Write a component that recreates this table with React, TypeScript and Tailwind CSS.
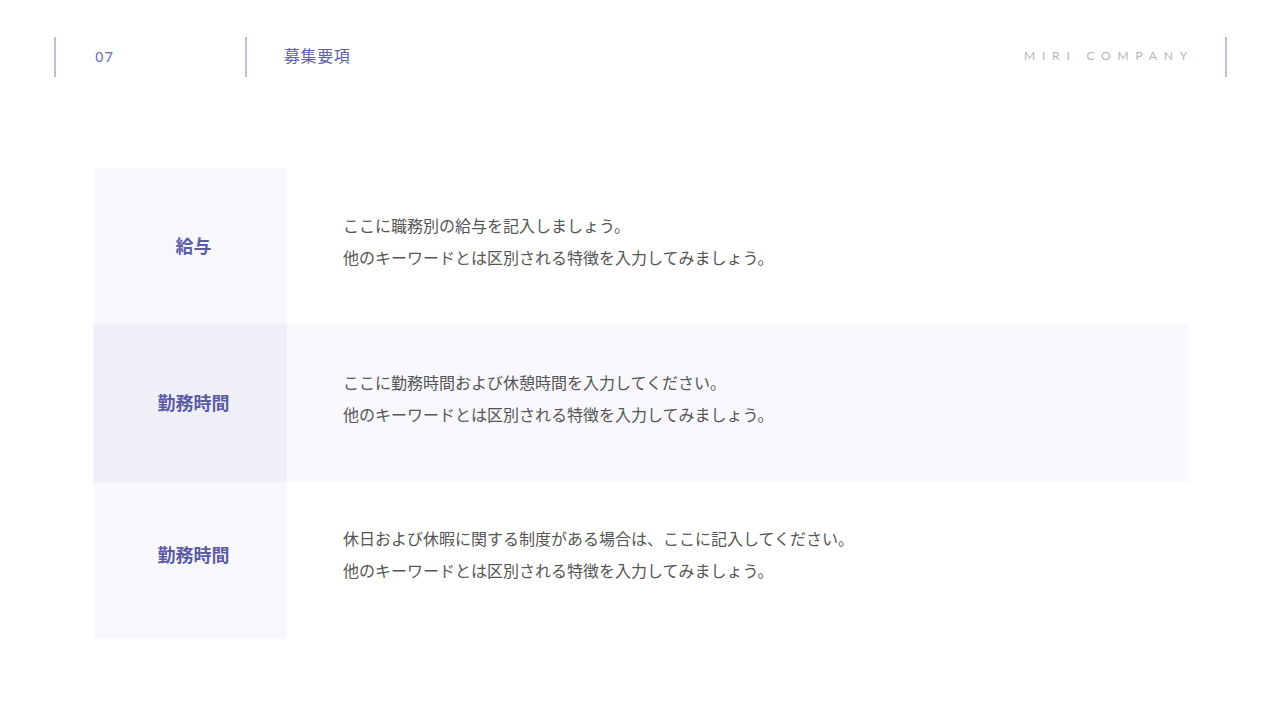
const rows = [
  {
    label: "給与",
    lines: ["ここに職務別の給与を記入しましょう。", "他のキーワードとは区別される特徴を入力してみましょう。"],
    highlight: false,
  },
  {
    label: "勤務時間",
    lines: ["ここに勤務時間および休憩時間を入力してください。", "他のキーワードとは区別される特徴を入力してみましょう。"],
    highlight: true,
  },
  {
    label: "勤務時間",
    lines: ["休日および休暇に関する制度がある場合は、ここに記入してください。", "他のキーワードとは区別される特徴を入力してみましょう。"],
    highlight: false,
  },
];

export default function App() {
  return (
    <main
      className="w-[1280px] h-[720px] bg-white overflow-hidden"
      style={{ fontFamily: '"Noto Sans", "Noto Sans CJK JP", sans-serif' }}
    >
      {/* Header */}
      <header className="flex items-center pt-[37px] pl-[54px] pr-[53px] h-[77px]">
        <div className="w-[2px] h-[40px] bg-[#bdbdd6]" />
        <div className="w-[189px] pl-[39px] pb-[2px] text-[15px] text-[#6d6db4] tracking-[1px]">07</div>
        <div className="w-[2px] h-[40px] bg-[#bdbdd6]" />
        <div className="pl-[37px] pb-[2px] text-[16px] tracking-[0.6px] text-[#5f5fa8]">募集要項</div>
        <div className="flex-1" />
        <div
          className="text-[12px] tracking-[6.8px] text-[#b4b4c0] pr-[31px] pb-[2px]"
          style={{ fontFamily: "Lato, sans-serif" }}
        >
          MIRI COMPANY
        </div>
        <div className="w-[2px] h-[40px] bg-[#bdbdd6]" />
      </header>

      {/* Table */}
      <section className="mt-[91px] ml-[94px] w-[1092px] flex flex-col">
        {rows.map((r, i) => (
          <div
            key={i}
            className={`flex h-[157px] ${
              r.highlight ? "bg-[#f7f7fc] shadow-[0_0_4px_rgba(236,236,248,0.8)]" : "bg-white"
            }`}
          >
            <div
              className={`w-[193px] flex items-center justify-center pl-[6px] text-[18px] font-bold text-[#5c5ca6] ${
                r.highlight ? "bg-[#efeff8]" : "bg-[#f8f8fc]"
              } ${i === 2 ? "pb-[10px]" : ""}`}
            >
              {r.label}
            </div>
            <div
              className={`flex flex-col justify-center pl-[56px] text-[16px] leading-[32px] text-[#555555] ${
                i === 2 ? "pb-[12px]" : "pb-[9px]"
              }`}
            >
              {r.lines.map((l, j) => (
                <p key={j}>{l}</p>
              ))}
            </div>
          </div>
        ))}
      </section>
    </main>
  );
}
